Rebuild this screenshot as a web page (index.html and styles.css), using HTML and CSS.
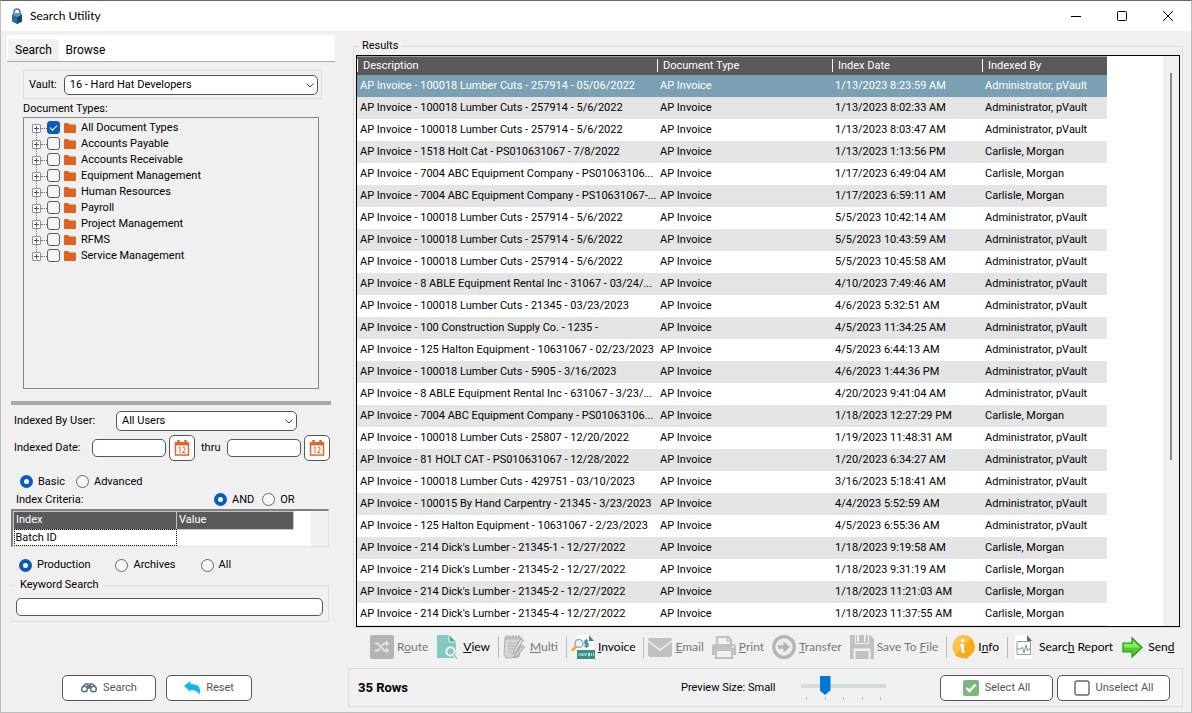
FILE: index.html
```html
<!DOCTYPE html>
<html lang="en">
<head>
<meta charset="utf-8">
<title>Search Utility</title>
<link rel="stylesheet" href="styles.css">
</head>
<body>
<div class="window">
  <header class="titlebar">
    <svg class="app-icon" viewBox="0 0 12 16" aria-hidden="true">
      <path d="M3 7V4a3 3 0 0 1 6 0v3" fill="none" stroke="#3f7fa8" stroke-width="1.6"/>
      <path d="M1 6.5 6 5l5 1.500v7L6 16l-5-2.500z" fill="#2a6d9c"/>
      <path d="M6 8l5-1.500v7L6 16z" fill="#17476f"/>
      <path d="M1 6.500 6 5l5 1.500L6 9z" fill="#5b9cc4"/>
    </svg>
    <h1 class="title">Search Utility</h1>
    <div class="window-controls">
      <button class="win-btn" aria-label="Minimize"><svg viewBox="0 0 12 12"><path d="M1 6.500h10" /></svg></button>
      <button class="win-btn" aria-label="Maximize"><svg viewBox="0 0 12 12"><rect x="1.500" y="1.500" width="9" height="9" rx="1"/></svg></button>
      <button class="win-btn" aria-label="Close"><svg viewBox="0 0 12 12"><path d="M1 1l10 10M11 1L1 11"/></svg></button>
    </div>
  </header>

  <main class="content">
    <form class="side">
      <nav class="tabs">
        <button type="button" class="tab tab-active">Search</button>
        <button type="button" class="tab">Browse</button>
      </nav>

      <div class="vault">
        <label for="vault">Vault:</label>
        <span class="select-wrap grow">
          <select id="vault"><option>16 - Hard Hat Developers</option></select>
          <svg class="chevron" viewBox="0 0 8 5"><path d="M.5.5 4 4 7.500.5"/></svg>
        </span>
      </div>

      <p class="tree-title">Document Types:</p>
      <ul class="tree">
        <li><button type="button" class="expander" aria-label="Expand"></button><label><input type="checkbox" class="check" checked><svg class="folder" viewBox="0 0 12 10"><path d="M0 1q0-1 1-1h3l1.500 1.500H11q1 0 1 1V9q0 1-1 1H1q-1 0-1-1z"/></svg>All Document Types</label></li>
        <li><button type="button" class="expander" aria-label="Expand"></button><label><input type="checkbox" class="check"><svg class="folder" viewBox="0 0 12 10"><path d="M0 1q0-1 1-1h3l1.500 1.500H11q1 0 1 1V9q0 1-1 1H1q-1 0-1-1z"/></svg>Accounts Payable</label></li>
        <li><button type="button" class="expander" aria-label="Expand"></button><label><input type="checkbox" class="check"><svg class="folder" viewBox="0 0 12 10"><path d="M0 1q0-1 1-1h3l1.500 1.500H11q1 0 1 1V9q0 1-1 1H1q-1 0-1-1z"/></svg>Accounts Receivable</label></li>
        <li><button type="button" class="expander" aria-label="Expand"></button><label><input type="checkbox" class="check"><svg class="folder" viewBox="0 0 12 10"><path d="M0 1q0-1 1-1h3l1.500 1.500H11q1 0 1 1V9q0 1-1 1H1q-1 0-1-1z"/></svg>Equipment Management</label></li>
        <li><button type="button" class="expander" aria-label="Expand"></button><label><input type="checkbox" class="check"><svg class="folder" viewBox="0 0 12 10"><path d="M0 1q0-1 1-1h3l1.500 1.500H11q1 0 1 1V9q0 1-1 1H1q-1 0-1-1z"/></svg>Human Resources</label></li>
        <li><button type="button" class="expander" aria-label="Expand"></button><label><input type="checkbox" class="check"><svg class="folder" viewBox="0 0 12 10"><path d="M0 1q0-1 1-1h3l1.500 1.500H11q1 0 1 1V9q0 1-1 1H1q-1 0-1-1z"/></svg>Payroll</label></li>
        <li><button type="button" class="expander" aria-label="Expand"></button><label><input type="checkbox" class="check"><svg class="folder" viewBox="0 0 12 10"><path d="M0 1q0-1 1-1h3l1.500 1.500H11q1 0 1 1V9q0 1-1 1H1q-1 0-1-1z"/></svg>Project Management</label></li>
        <li><button type="button" class="expander" aria-label="Expand"></button><label><input type="checkbox" class="check"><svg class="folder" viewBox="0 0 12 10"><path d="M0 1q0-1 1-1h3l1.500 1.500H11q1 0 1 1V9q0 1-1 1H1q-1 0-1-1z"/></svg>RFMS</label></li>
        <li><button type="button" class="expander" aria-label="Expand"></button><label><input type="checkbox" class="check"><svg class="folder" viewBox="0 0 12 10"><path d="M0 1q0-1 1-1h3l1.500 1.500H11q1 0 1 1V9q0 1-1 1H1q-1 0-1-1z"/></svg>Service Management</label></li>
      </ul>

      <div class="splitter"></div>

      <div class="user-row">
        <label for="user">Indexed By User:</label>
        <span class="select-wrap user-select">
          <select id="user"><option>All Users</option></select>
          <svg class="chevron" viewBox="0 0 8 5"><path d="M.5.5 4 4 7.500.5"/></svg>
        </span>
      </div>

      <div class="date-row">
        <label class="date-label" for="from">Indexed Date:</label>
        <input class="field date" id="from" type="text">
        <button type="button" class="calendar" aria-label="Pick start date"><svg viewBox="0 0 16 16"><path d="M1.500 3h13v12h-13z" fill="none" stroke="#e0662c" stroke-width="1.500"/><path d="M1 2h14v3.500H1z" fill="#e0662c"/><path d="M4.500 0v4M11.500 0v4" stroke="#e0662c" stroke-width="2.500"/><path d="M4.500 8l1.500-1v6M8.500 8q1.500-1.500 2.500 0t-2.500 4.500h3" fill="none" stroke="#e0662c"/></svg></button>
        <label for="to">thru</label>
        <input class="field date" id="to" type="text">
        <button type="button" class="calendar" aria-label="Pick end date"><svg viewBox="0 0 16 16"><path d="M1.500 3h13v12h-13z" fill="none" stroke="#e0662c" stroke-width="1.500"/><path d="M1 2h14v3.500H1z" fill="#e0662c"/><path d="M4.500 0v4M11.500 0v4" stroke="#e0662c" stroke-width="2.500"/><path d="M4.500 8l1.500-1v6M8.500 8q1.500-1.500 2.500 0t-2.500 4.500h3" fill="none" stroke="#e0662c"/></svg></button>
      </div>

      <div class="mode-row">
        <label class="radio"><input type="radio" name="mode" checked>Basic</label>
        <label class="radio"><input type="radio" name="mode">Advanced</label>
      </div>

      <div class="criteria-row">
        <span class="criteria-title">Index Criteria:</span>
        <label class="radio"><input type="radio" name="join" checked>AND</label>
        <label class="radio"><input type="radio" name="join">OR</label>
      </div>

      <div class="criteria">
        <table class="criteria-table">
          <thead><tr><th>Index</th><th>Value</th></tr></thead>
          <tbody><tr><td class="focused">Batch ID</td><td></td></tr></tbody>
        </table>
        <div class="criteria-track"></div>
      </div>

      <div class="scope-row">
        <label class="radio"><input type="radio" name="scope" checked>Production</label>
        <label class="radio"><input type="radio" name="scope">Archives</label>
        <label class="radio"><input type="radio" name="scope">All</label>
      </div>

      <fieldset class="keyword">
        <legend>Keyword Search</legend>
        <input class="field" type="text" aria-label="Keyword Search">
      </fieldset>

      <div class="side-actions">
        <button type="button" class="push search-btn"><svg class="bino" viewBox="0 0 16 10"><circle cx="3.500" cy="6" r="2.800"/><circle cx="12.500" cy="6" r="2.800"/><path d="M1.500 4 4.500 1h2.500v5M14.500 4l-3-3H9v5" /><path d="M6 2h4v3H6z" fill="#5d7182" stroke="none"/></svg>Search</button>
        <button type="button" class="push reset-btn"><svg class="undo" viewBox="0 0 16 14"><path d="M0 5 6.500 0v3Q16 3 16 9q0 3-1 5-1-5-8.500-5v2z" fill="#12b9f1"/></svg>Reset</button>
      </div>
    </form>

    <section class="main">
      <fieldset class="results">
        <legend>Results</legend>
        <div class="list">
          <table class="results-table">
            <colgroup><col class="c-desc"><col class="c-type"><col class="c-date"><col class="c-by"></colgroup>
            <thead><tr><th>Description</th><th>Document Type</th><th>Index Date</th><th>Indexed By</th></tr></thead>
            <tbody>
              <tr class="selected"><td>AP Invoice - 100018 Lumber Cuts - 257914 - 05/06/2022</td><td>AP Invoice</td><td>1/13/2023 8:23:59 AM</td><td>Administrator, pVault</td></tr>
              <tr><td>AP Invoice - 100018 Lumber Cuts - 257914 - 5/6/2022</td><td>AP Invoice</td><td>1/13/2023 8:02:33 AM</td><td>Administrator, pVault</td></tr>
              <tr><td>AP Invoice - 100018 Lumber Cuts - 257914 - 5/6/2022</td><td>AP Invoice</td><td>1/13/2023 8:03:47 AM</td><td>Administrator, pVault</td></tr>
              <tr><td>AP Invoice - 1518 Holt Cat - PS010631067 - 7/8/2022</td><td>AP Invoice</td><td>1/13/2023 1:13:56 PM</td><td>Carlisle, Morgan</td></tr>
              <tr><td>AP Invoice - 7004 ABC Equipment Company - PS01063106...</td><td>AP Invoice</td><td>1/17/2023 6:49:04 AM</td><td>Carlisle, Morgan</td></tr>
              <tr><td>AP Invoice - 7004 ABC Equipment Company - PS10631067-...</td><td>AP Invoice</td><td>1/17/2023 6:59:11 AM</td><td>Carlisle, Morgan</td></tr>
              <tr><td>AP Invoice - 100018 Lumber Cuts - 257914 - 5/6/2022</td><td>AP Invoice</td><td>5/5/2023 10:42:14 AM</td><td>Administrator, pVault</td></tr>
              <tr><td>AP Invoice - 100018 Lumber Cuts - 257914 - 5/6/2022</td><td>AP Invoice</td><td>5/5/2023 10:43:59 AM</td><td>Administrator, pVault</td></tr>
              <tr><td>AP Invoice - 100018 Lumber Cuts - 257914 - 5/6/2022</td><td>AP Invoice</td><td>5/5/2023 10:45:58 AM</td><td>Administrator, pVault</td></tr>
              <tr><td>AP Invoice - 8 ABLE Equipment Rental Inc - 31067 - 03/24/...</td><td>AP Invoice</td><td>4/10/2023 7:49:46 AM</td><td>Administrator, pVault</td></tr>
              <tr><td>AP Invoice - 100018 Lumber Cuts - 21345 - 03/23/2023</td><td>AP Invoice</td><td>4/6/2023 5:32:51 AM</td><td>Administrator, pVault</td></tr>
              <tr><td>AP Invoice - 100 Construction Supply Co. - 1235 -</td><td>AP Invoice</td><td>4/5/2023 11:34:25 AM</td><td>Administrator, pVault</td></tr>
              <tr><td>AP Invoice - 125 Halton Equipment - 10631067 - 02/23/2023</td><td>AP Invoice</td><td>4/5/2023 6:44:13 AM</td><td>Administrator, pVault</td></tr>
              <tr><td>AP Invoice - 100018 Lumber Cuts - 5905 - 3/16/2023</td><td>AP Invoice</td><td>4/6/2023 1:44:36 PM</td><td>Administrator, pVault</td></tr>
              <tr><td>AP Invoice - 8 ABLE Equipment Rental Inc - 631067 - 3/23/...</td><td>AP Invoice</td><td>4/20/2023 9:41:04 AM</td><td>Administrator, pVault</td></tr>
              <tr><td>AP Invoice - 7004 ABC Equipment Company - PS01063106...</td><td>AP Invoice</td><td>1/18/2023 12:27:29 PM</td><td>Carlisle, Morgan</td></tr>
              <tr><td>AP Invoice - 100018 Lumber Cuts - 25807 - 12/20/2022</td><td>AP Invoice</td><td>1/19/2023 11:48:31 AM</td><td>Administrator, pVault</td></tr>
              <tr><td>AP Invoice - 81 HOLT CAT - PS010631067 - 12/28/2022</td><td>AP Invoice</td><td>1/20/2023 6:34:27 AM</td><td>Administrator, pVault</td></tr>
              <tr><td>AP Invoice - 100018 Lumber Cuts - 429751 - 03/10/2023</td><td>AP Invoice</td><td>3/16/2023 5:18:41 AM</td><td>Administrator, pVault</td></tr>
              <tr><td>AP Invoice - 100015 By Hand Carpentry - 21345 - 3/23/2023</td><td>AP Invoice</td><td>4/4/2023 5:52:59 AM</td><td>Administrator, pVault</td></tr>
              <tr><td>AP Invoice - 125 Halton Equipment - 10631067 - 2/23/2023</td><td>AP Invoice</td><td>4/5/2023 6:55:36 AM</td><td>Administrator, pVault</td></tr>
              <tr><td>AP Invoice - 214 Dick's Lumber - 21345-1 - 12/27/2022</td><td>AP Invoice</td><td>1/18/2023 9:19:58 AM</td><td>Carlisle, Morgan</td></tr>
              <tr><td>AP Invoice - 214 Dick's Lumber - 21345-2 - 12/27/2022</td><td>AP Invoice</td><td>1/18/2023 9:31:19 AM</td><td>Carlisle, Morgan</td></tr>
              <tr><td>AP Invoice - 214 Dick's Lumber - 21345-2 - 12/27/2022</td><td>AP Invoice</td><td>1/18/2023 11:21:03 AM</td><td>Carlisle, Morgan</td></tr>
              <tr><td>AP Invoice - 214 Dick's Lumber - 21345-4 - 12/27/2022</td><td>AP Invoice</td><td>1/18/2023 11:37:55 AM</td><td>Carlisle, Morgan</td></tr>
              <tr><td></td><td></td><td></td><td></td></tr>
            </tbody>
          </table>
          <div class="scroll-track"><div class="scroll-thumb"></div></div>
        </div>
      </fieldset>

      <div class="toolbar">
        <button class="tool" disabled><svg viewBox="0 0 24 24"><rect width="24" height="24" rx="2" fill="#b3b3b3"/><path d="M5 8.500h3l6 7h3M5 15.500h3l2-2.300M12 10.800l2-2.300h3" fill="none" stroke="#e4e4e4" stroke-width="1.800"/><path d="M16 5.500l3.500 3-3.500 3zM16 12.500l3.500 3-3.500 3z" fill="#e4e4e4"/></svg><span>R<u>o</u>ute</span></button>
        <button class="tool"><svg viewBox="0 0 24 24"><path d="M1 0h12l7 7v16H1z" fill="#82c9c0"/><path d="M13 0v7h7z" fill="#58a99e"/><path d="M13 0v7h7" fill="none" stroke="#f0f0f0"/><circle cx="14.500" cy="16.500" r="4.200" fill="#82c9c0" stroke="#fff" stroke-width="1.800"/><path d="M17.500 19.500l3.500 4" stroke="#fff" stroke-width="3"/><path d="M17.500 19.500l3.500 4" stroke="#82c9c0" stroke-width="1.600"/></svg><span><u>V</u>iew</span></button>
        <i class="sep"></i>
        <button class="tool" disabled><svg viewBox="0 0 24 24"><path d="M2 2h16l-2 20-13 1-2-3z" fill="#d5d5d5" stroke="#b0b0b0"/><path d="M2 4h16M5 8h10M5 11h8M5 14h6M5 17h4" stroke="#b5b5b5"/><path d="M4 0v4M7 0v4M10 0v4M13 0v4M16 0v4" stroke="#aaa"/><path d="M11 15 18 3.500l2.500 1.500-7 11-3.500 3z" fill="#ddd" stroke="#a5a5a5"/><path d="M12 19l7-9 2.500 2-7 9-4 1.500z" fill="#ccc" stroke="#a5a5a5"/></svg><span><u>M</u>ulti</span></button>
        <i class="sep"></i>
        <button class="tool"><svg viewBox="0 0 24 24"><path d="M6 0h12l5 6v17H6z" fill="#fff"/><path d="M18 0v6h5z" fill="#348f84"/><path d="M6 15h18v9H6z" fill="#348f84"/><path d="M8 18v3M10 21v-3l2 3v-3M13.500 18l1 3 1-3M17.500 18h1v3h-1zM20.500 18v3M22.500 18v3" fill="none" stroke="#d9eeea" stroke-width=".8"/><circle cx="8" cy="8.500" r="4" fill="#eef5fa" stroke="#9aa9af" stroke-width="1.500"/><path d="M5 11.500l-4 4" stroke="#f3a928" stroke-width="2.500"/><path d="M17 6h-3v2.500h3V11h-3.500M15.300 4v9" fill="none" stroke="#348f84" stroke-width="1.300"/></svg><span><u>I</u>nvoice</span></button>
        <i class="sep"></i>
        <button class="tool" disabled><svg viewBox="0 0 24 24"><rect y="3" width="24" height="19" rx="2" fill="#c1c1c1"/><path d="M0 6l12 9 12-9" fill="none" stroke="#f0f0f0" stroke-width="1.500"/></svg><span><u>E</u>mail</span></button>
        <button class="tool" disabled><svg viewBox="0 0 24 24"><path d="M5 10V2h11l3 3v5" fill="none" stroke="#c1c1c1" stroke-width="2.200"/><path d="M0 12q0-3 3-3h18q3 0 3 3v8H0z" fill="#c1c1c1"/><rect x="4" y="15" width="16" height="8" fill="#f0f0f0" stroke="#c1c1c1" stroke-width="2"/><path d="M15 1v5h5" fill="none" stroke="#c1c1c1" stroke-width="1.500"/><circle cx="21" cy="12" r="1" fill="#eee"/></svg><span><u>P</u>rint</span></button>
        <button class="tool" disabled><svg viewBox="0 0 24 24"><circle cx="12" cy="12" r="10.300" fill="#ededed" stroke="#b5b5b5" stroke-width="3.300"/><path d="M6 10.300h5.500V6.500l6.500 5.500-6.500 5.500v-3.800H6z" fill="#b3b3b3"/></svg><span><u>T</u>ransfer</span></button>
        <button class="tool" disabled><svg viewBox="0 0 24 24"><path d="M0 0h20l4 4v20H0z" fill="#c1c1c1"/><path d="M5 0h14v9H5zM3.500 13.500h17V24h-17z" fill="#f0f0f0"/><path d="M9 0h5v7H9zM15.500 0H18v8H6V0h1v7h8.500zM5.500 16h13v8h-13z" fill="#c1c1c1"/></svg><span>Save To <u>F</u>ile</span></button>
        <i class="sep"></i>
        <button class="tool"><svg viewBox="0 0 24 24"><path d="M12 0a11.500 11.500 0 1 0 2 23l.5 1q6-4 8-7A11.500 11.500 0 0 0 12 0z" fill="#fbc14a"/><path d="M20 3.500 4 20q4 3.600 9.500 3l1 1q7-4 8.500-9 2-6-3-11.500z" fill="#f7ab1c"/><circle cx="11.500" cy="5.500" r="1.800" fill="#fff"/><path d="M9.500 9.500h3.300V16q0 1.500 1.200 1.500-3 1-3.500-1V11h-1z" fill="#fff" stroke="#fff" stroke-width=".6"/></svg><span>I<u>n</u>fo</span></button>
        <i class="sep"></i>
        <button class="tool"><svg viewBox="0 0 24 24"><path d="M3 0h12l5 6v18H3z" fill="#fff"/><path d="M15 0l5 6h-5z" fill="#4e6d7c"/><path d="M5 6.500h13.500v13H5z" fill="none" stroke="#9a9a9a"/><path d="M5 14h4l1.500-2 1.500 6 2-8 1.500 6 1-2h2.500" fill="none" stroke="#62a779" stroke-width="1"/></svg><span>Searc<u>h</u> Report</span></button>
        <button class="tool"><svg viewBox="0 0 24 24"><path d="M2 8h9V3l10 9.500L11 22v-5H2z" fill="#4fd02b" stroke="#24951a" stroke-width="1.200"/><path d="M3 9h9V5.500l7 7H3z" fill="#8bea66"/></svg><span>Sen<u>d</u></span></button>
      </div>

      <footer class="status">
        <strong class="count">35 Rows</strong>
        <label class="preview" for="preview">Preview Size: Small</label>
        <div class="slider">
          <input id="preview" type="range" min="0" max="4" value="1">
          <div class="ticks"><i></i><i></i><i></i><i></i><i></i></div>
        </div>
        <div class="select-actions">
          <button class="push"><svg class="box-icon" viewBox="0 0 16 16"><rect width="16" height="16" rx="2" fill="#7db77f"/><path d="M3.500 8l3 3 6-6.500" fill="none" stroke="#fff" stroke-width="2.300"/></svg>Select All</button>
          <button class="push"><svg class="box-icon" viewBox="0 0 16 16"><rect x="1" y="1" width="14" height="14" rx="2" fill="#fff" stroke="#666" stroke-width="1.400"/></svg>Unselect All</button>
        </div>
      </footer>
    </section>
  </main>
</div>
</body>
</html>
```
FILE: styles.css
```css
* { box-sizing: border-box; }

body {
  margin: 0;
  font: 11px/14px Roboto, "Liberation Sans", sans-serif;
  color: #000;
  background: #f0f0f0;
}

button, input, select { font: inherit; color: inherit; }
button { padding: 0; border: 0; background: none; }
fieldset { margin: 0; padding: 0; min-width: 0; border: 1px solid #dcdcdc; }

.window {
  display: flex;
  flex-direction: column;
  height: 100vh;
  border: 1px solid #bdbdbd;
  border-top-color: #666;
}

/* Title bar */
.titlebar {
  display: flex;
  align-items: center;
  height: 30px;
  padding-left: 10px;
  background: #fff;
}
.app-icon { width: 12px; height: 16px; margin-right: 7px; }
.title {
  flex: 1;
  margin: 0;
  font: 12px/16px Lato, "Open Sans", sans-serif;
}
.window-controls { display: flex; }
.win-btn { display: grid; place-items: center; width: 46px; height: 30px; }
.win-btn svg { width: 12px; height: 12px; fill: none; stroke: #000; }

.content { flex: 1; display: flex; min-height: 0; }

/* Search panel */
.side {
  display: flex;
  flex-direction: column;
  width: 328px;
  margin: 4px 12px 11px 6px;
}
.tabs {
  display: flex;
  gap: 1px;
  height: 27px;
  padding-top: 4px;
  padding-left: 1px;
  background: #fff;
  border-bottom: 1px solid #a8a8a8;
}
.tab { width: 51px; font-size: 12px; }
.tab-active { background: #f0f0f0; border-radius: 4px 4px 0 0; }

.vault {
  display: flex;
  align-items: center;
  gap: 7px;
  height: 29px;
  margin: 8px 13px 0 16px;
  padding: 0 3px 0 5px;
  border: 1px solid #dcdcdc;
}
.select-wrap { position: relative; display: flex; height: 20px; }
.grow { flex: 1; }
.select-wrap select {
  appearance: none;
  width: 100%;
  padding: 0 20px 0 5px;
  background: #fff;
  border: 1px solid #555;
  border-radius: 5px;
}
.chevron {
  position: absolute;
  top: 8px;
  right: 4px;
  width: 8px;
  height: 5px;
  fill: none;
  stroke: #444;
  pointer-events: none;
}

.tree-title { margin: 3px 0 1px 16px; }
.tree {
  flex: 1 1 0;
  min-height: 0;
  margin: 0 16px 0 16px;
  padding: 2px 8px;
  overflow: hidden;
  list-style: none;
  border: 1px solid #828790;
}
.tree li { position: relative; display: flex; align-items: center; height: 16px; }
.tree li + li::before {
  content: "";
  position: absolute;
  top: -4px;
  left: 4px;
  height: 8px;
  border-left: 1px dotted #777;
}
.tree label {
  display: flex;
  align-items: center;
}
.tree label::before { content: ""; width: 6px; border-top: 1px dotted #777; }
.expander {
  width: 9px;
  height: 9px;
  border: 1px solid #919191;
  border-radius: 1px;
  background:
    linear-gradient(#3f5a9b, #3f5a9b) center / 5px 1px no-repeat,
    linear-gradient(#3f5a9b, #3f5a9b) center / 1px 5px no-repeat,
    #fff;
}
.check {
  appearance: none;
  width: 13px;
  height: 13px;
  margin: 0 4px 2px 0;
  background: #f6f6f6;
  border: 1px solid #5e5e5e;
  border-radius: 3px;
}
.check:checked { display: grid; place-items: center; background: #0a5cb8; border-color: #0a5cb8; }
.check:checked::before {
  content: "";
  width: 6px;
  height: 3px;
  border: solid #fff;
  border-width: 0 0 1px 1px;
  transform: rotate(-45deg);
}
.folder { width: 12px; height: 10px; margin-right: 5px; fill: #dc6420; }

.splitter { height: 4px; margin: 12px 4px 0; background: #a8a8a8; }

.user-row { display: flex; align-items: center; margin: 6px 0 0 7px; }
.user-row label { width: 102px; }
.user-select { width: 181px; }

.date-row { display: flex; align-items: center; margin: 4px 0 0 7px; }
.date-label { width: 78px; }
.field {
  height: 18px;
  padding: 0 4px;
  background: #fff;
  border: 1px solid #555;
  border-radius: 5px;
}
.date { width: 74px; margin-right: 3px; }
.calendar {
  display: grid;
  place-items: center;
  width: 26px;
  height: 26px;
  background: #fff;
  border: 1px solid #555;
  border-radius: 5px;
}
.calendar svg { width: 16px; height: 16px; }
.calendar + label { margin: 0 7px 0 6px; }

.radio { display: flex; align-items: center; gap: 5px; }
.radio input {
  appearance: none;
  width: 13px;
  height: 13px;
  margin: 0;
  border: 1px solid #666;
  border-radius: 50%;
  background: #f6f6f6;
}
.radio input:checked { background: #fff; border: 4px solid #0a5cb8; }

.mode-row { display: flex; gap: 11px; margin: 14px 0 0 13px; }
.criteria-row { display: flex; gap: 8px; margin: 4px 0 0 9px; }
.criteria-title { width: 190px; }

.criteria {
  display: flex;
  margin: 2px 6px 0 4px;
  background: #fff;
  border: 1px solid #e3e3e3;
  border-top: 2px solid #808080;
  border-left: 2px solid #808080;
}
.criteria-table { flex: none; width: 281px; border-collapse: collapse; table-layout: fixed; }
.criteria-table th {
  height: 18px;
  padding: 0 2px;
  color: #fff;
  background: #5a5a5a;
  border: 1px solid #c4c4c4;
  font-weight: 400;
  text-align: left;
}
.criteria-table th:first-child { width: 163px; }
.criteria-table td { height: 17px; padding: 0 2px; }
.criteria-table .focused { outline: 1px dotted #000; outline-offset: -1px; }
.criteria-track { width: 17px; margin-left: auto; background: #f0f0f0; }

.scope-row { display: flex; gap: 25px; margin: 11px 0 0 12px; }

.keyword { margin: 6px 6px 0 4px; padding: 6px 5px 5px; border-left: 0; }
.keyword legend { margin-left: 1px; padding: 0 3px; }
.keyword .field { display: block; width: 100%; }

.side-actions { display: flex; gap: 10px; margin: 53px 0 0 55px; }
.push {
  display: flex;
  align-items: center;
  justify-content: center;
  gap: 6px;
  height: 26px;
  color: #555;
  background: #fff;
  border: 1px solid #555;
  border-radius: 5px;
}
.search-btn { width: 94px; }
.reset-btn { width: 86px; }
.bino { width: 16px; height: 10px; fill: none; stroke: #5d7182; stroke-width: 1.500; }
.undo { width: 16px; height: 14px; }

/* Results */
.main { flex: 1; display: flex; flex-direction: column; min-width: 0; padding: 8px 8px 5px 0; }
.results { flex: 1 1 0; min-height: 0; display: flex; margin-left: 6px; padding: 2px 2px 0; }
.results legend { margin-left: 3px; padding: 0 3px; }
.list {
  flex: 1;
  display: flex;
  min-width: 0;
  height: 100%;
  overflow: hidden;
  background: #fff;
  border: 1px solid #000;
}
.results-table { width: 750px; flex: none; align-self: flex-start; border-collapse: collapse; table-layout: fixed; }
.c-desc { width: 300px; }
.c-type { width: 175px; }
.c-date { width: 150px; }
.c-by { width: 125px; }
.results-table th {
  height: 18px;
  padding: 0 0 0 6px;
  color: #fff;
  background: linear-gradient(#fff, #fff) left 2px / 1px 13px no-repeat, #5a5a5a;
  border-top: 1px solid #a0a0a0;
  font-weight: 400;
  text-align: left;
}
.results-table td { height: 22px; padding: 1px 0 0 3px; white-space: nowrap; }
.results-table tbody tr:nth-child(even) { background: #e4e4e4; }
.results-table .selected { color: #fff; background: #7b9fb3; }
.scroll-track { width: 16px; margin-left: auto; padding: 17px 7px 0; background: #f0f0f0; }
.scroll-thumb { height: 70%; background: #8a8a8a; }

/* Toolbar */
.toolbar {
  display: flex;
  align-items: center;
  height: 40px;
  padding: 0 0 2px 23px;
  font: 12px/16px Lato, "Open Sans", sans-serif;
}
.tool { display: flex; flex: none; align-items: center; gap: 3px; margin-right: 8px; white-space: nowrap; }
.tool:disabled { color: #777; }
.tool svg { width: 24px; height: 24px; }
.sep { flex: none; width: 1px; height: 21px; margin-right: 4px; background: #bcbcbc; }

/* Status bar */
.status {
  display: flex;
  align-items: center;
  height: 39px;
  margin-left: 1px;
  padding: 0 12px 0 9px;
  border: 1px solid #dcdcdc;
}
.count { width: 323px; font-size: 13px; }
.preview { width: 120px; }
.slider { width: 85px; }
.slider input {
  appearance: none;
  display: block;
  width: 100%;
  height: 20px;
  margin: 0;
  background: linear-gradient(#d6dcda, #d6dcda) center / 100% 4px no-repeat;
}
.slider input::-webkit-slider-thumb {
  appearance: none;
  width: 11px;
  height: 19px;
  background: #0078d7;
  clip-path: polygon(0 0, 100% 0, 100% 75%, 50% 100%, 0 75%);
}
.ticks { display: flex; justify-content: space-between; padding: 1px 5px 0; }
.ticks i { width: 1px; height: 3px; background: #bbb; }
.select-actions { display: flex; gap: 4px; margin-left: auto; }
.select-actions .push { width: 113px; }
.box-icon { width: 16px; height: 16px; }
```
